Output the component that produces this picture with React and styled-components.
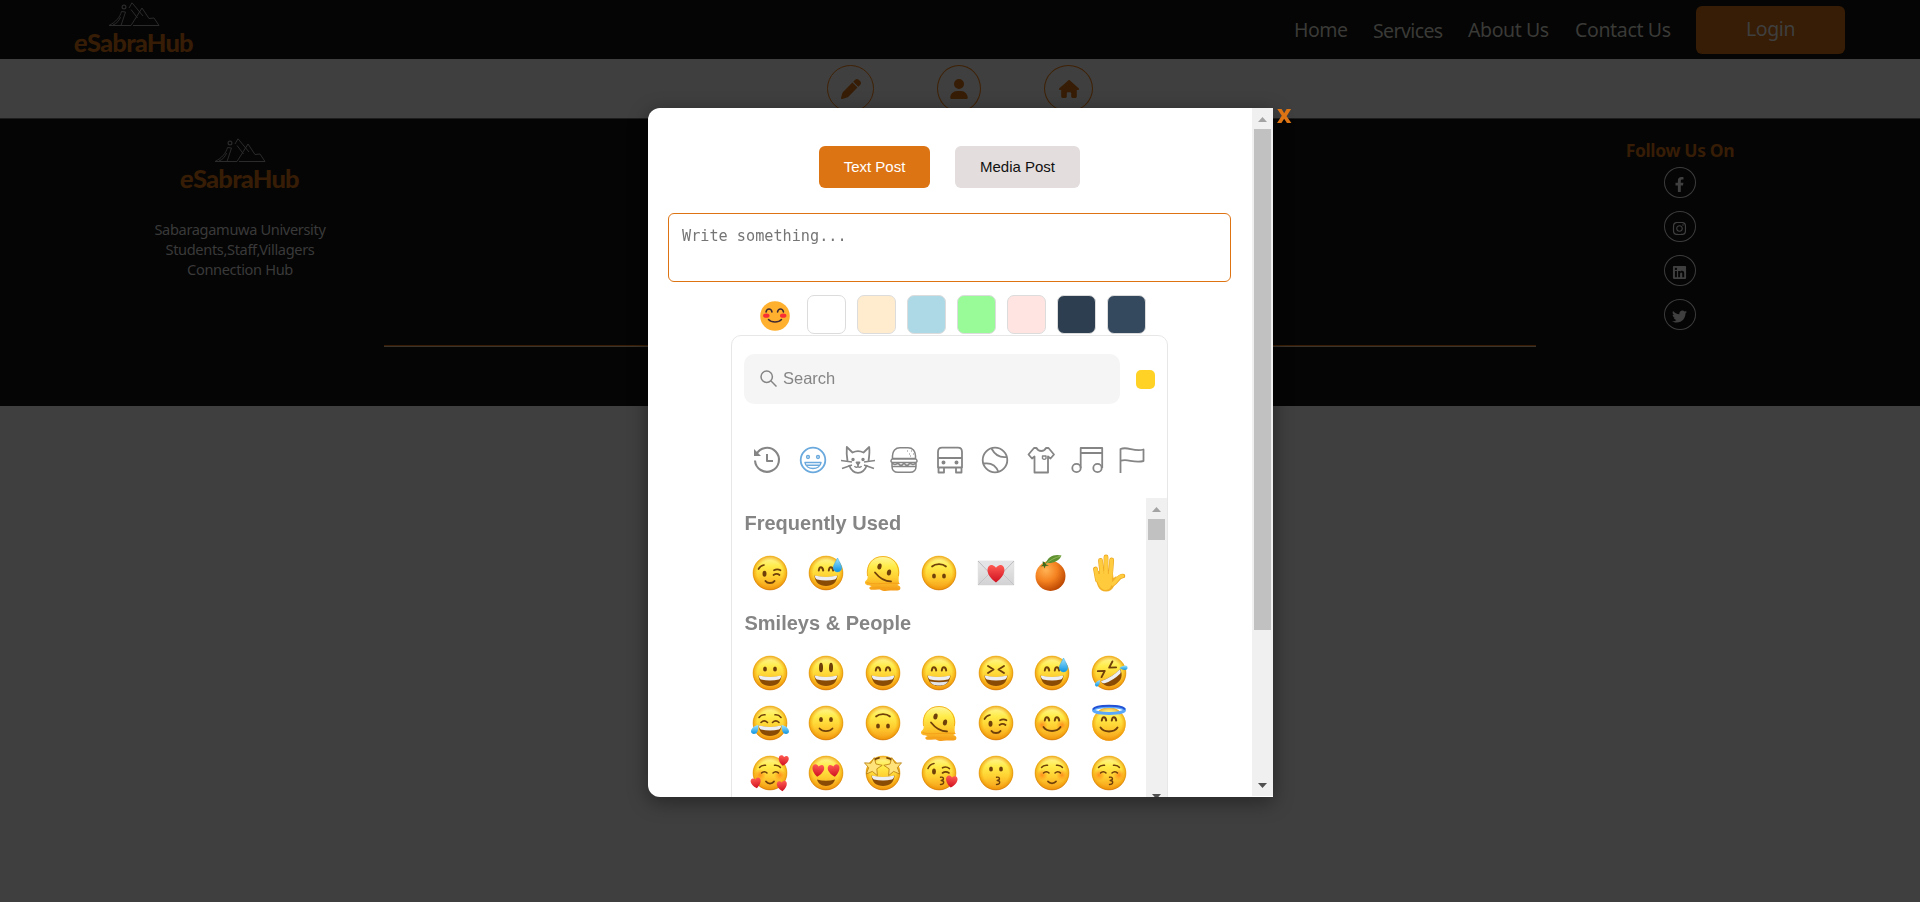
import React from 'react';
import styled, { createGlobalStyle } from 'styled-components';
import { FaPen, FaUser, FaHouse } from 'react-icons/fa6';
import { FaFacebookF, FaInstagram, FaLinkedin, FaTwitter } from 'react-icons/fa';

const GlobalStyle = createGlobalStyle`
  * { box-sizing: border-box; }
  body {
    margin: 0;
    background: #3f3f3f;
    font-family: "Noto Sans", "Open Sans", sans-serif;
    overflow: hidden;
  }
`;

/* ---------- page behind the dialog ---------- */

const Page = styled.div`
  min-height: 902px;
  background: #3f3f3f;
`;

const Header = styled.header`
  display: flex;
  justify-content: space-between;
  align-items: flex-start;
  height: 59px;
  padding: 0 75px;
  background: #050505;
`;

const Nav = styled.nav`
  display: flex;
  align-items: center;
  height: 60px;
`;

const NavLink = styled.a`
  width: ${(p) => p.$w}px;
  margin-right: ${(p) => p.$gap}px;
  margin-bottom: 2px;
  padding-top: ${(p) => p.$drop || 0}px;
  color: #3a3a37;
  font-size: 19.5px;
  line-height: 27px;
  letter-spacing: ${(p) => p.$track}px;
  white-space: nowrap;
`;

const LoginButton = styled.button`
  width: 149px;
  height: 48px;
  padding: 0 0 4px;
  border: 0;
  border-radius: 6px;
  background: #371d05;
  color: #3f3f3f;
  font: 19.5px "Noto Sans", sans-serif;
  letter-spacing: -0.4px;
`;

const IconBar = styled.div`
  display: flex;
  justify-content: center;
  gap: 63px;
  height: 59px;
  padding-top: 6px;
`;

const RoundIcon = styled.div`
  display: flex;
  align-items: center;
  justify-content: center;
  width: ${(p) => p.$w}px;
  height: 47px;
  border: 1px solid #3f2105;
  border-radius: 50%;
  color: #371d05;
  font-size: 20px;
`;

const Footer = styled.footer`
  height: 288px;
  border-top: 1px solid #1d1d1d;
  background: #050505;
`;

const FooterColumns = styled.div`
  display: flex;
  justify-content: space-between;
  height: 226px;
`;

const FooterColumn = styled.div`
  display: flex;
  flex-direction: column;
  align-items: center;
  width: 480px;
  padding-top: ${(p) => p.$top}px;
`;

const About = styled.p`
  margin: 27px 0 0;
  color: #3a3a3a;
  font-size: 14.6px;
  line-height: 20px;
  letter-spacing: -0.35px;
  text-align: center;
`;

const FollowTitle = styled.h3`
  margin: 0 0 5px;
  color: #371d05;
  font-size: 17.5px;
  font-weight: 700;
  line-height: 24px;
  letter-spacing: -0.35px;
  white-space: nowrap;
`;

const SocialLink = styled.a`
  display: flex;
  align-items: center;
  justify-content: center;
  width: 32px;
  height: 31px;
  margin-bottom: 13px;
  padding: 3px 1px 0 0;
  border: 1px solid #3c3c3c;
  border-radius: 50%;
  color: #3f3f3f;
  font-size: 15px;
`;

const Divider = styled.hr`
  width: 60%;
  height: 2px;
  margin: 0 auto;
  border: 0;
  border-top: 1px solid #371d05;
  border-bottom: 1px solid #3a332c;
`;

/* ---------- dialog ---------- */

const Dialog = styled.div`
  position: fixed;
  top: 108px;
  left: 648px;
  display: flex;
  width: 625px;
  height: 689px;
  border-radius: 12px 0 0 12px;
  background: #fff;
  box-shadow: 0 5px 20px rgba(0, 0, 0, 0.4);
`;

const DialogBody = styled.div`
  display: flex;
  flex-direction: column;
  align-items: center;
  width: 604px;
  padding: 38px 21px 0 20px;
  overflow: hidden;
  border-radius: 12px 0 0 12px;
`;

const CloseButton = styled.button`
  position: absolute;
  top: -4px;
  left: 629px;
  padding: 0;
  border: 0;
  background: none;
  color: #dd7414;
  font: 900 20px/24px "Noto Sans", sans-serif;
`;

const Tabs = styled.div`
  display: flex;
  flex: none;
  gap: 25px;
`;

const Tab = styled.button`
  width: ${(p) => p.$w}px;
  height: 42px;
  padding: 0 0 2px;
  border: 0;
  border-radius: 6px;
  background: ${(p) => (p.$active ? '#dd7414' : '#e3dddd')};
  color: ${(p) => (p.$active ? '#fff' : '#111')};
  font: 15px "Liberation Sans", Arial, sans-serif;
`;

const PostInput = styled.textarea`
  flex: none;
  width: 563px;
  height: 69px;
  margin-top: 25px;
  padding: 12px 13px;
  border: 1px solid #dd7414;
  border-radius: 6px;
  outline: 0;
  resize: none;
  overflow: hidden;
  font: 15.2px/20px "DejaVu Sans Mono", monospace;
  &::placeholder { color: #757575; }
`;

const SwatchRow = styled.div`
  display: flex;
  flex: none;
  align-items: center;
  gap: 11px;
  margin-top: 12px;
  height: 41px;
`;

const EmojiToggle = styled.span`
  display: flex;
  justify-content: flex-end;
  width: 42px;
  padding: 3px 6px 0 0;
`;

const Swatch = styled.span`
  width: 39px;
  height: 39px;
  border: 1px solid #dcdcdc;
  border-radius: 7px;
  background: ${(p) => p.$color};
`;

const Picker = styled.section`
  flex: none;
  width: 437px;
  height: 480px;
  border: 1px solid #e7e7e7;
  border-radius: 10px;
  background: #fff;
  font-family: "Liberation Sans", Arial, sans-serif;
  color: #858585;
`;

const SearchRow = styled.div`
  display: flex;
  align-items: center;
  gap: 16px;
  padding: 18px 12px 0;
`;

const SearchBox = styled.div`
  display: flex;
  align-items: center;
  gap: 6px;
  width: 376px;
  height: 50px;
  padding: 0 16px 1px;
  border-radius: 10px;
  background: #f5f5f5;
  font-size: 16.5px;
`;

const SkinTone = styled.span`
  width: 19px;
  height: 19px;
  border-radius: 5px;
  background: #ffd225;
`;

const Categories = styled.div`
  display: flex;
  height: 94px;
  padding: 42px 0 0 12px;
`;

const Category = styled.span`
  display: flex;
  justify-content: center;
  width: 45.7px;
  color: ${(p) => (p.$active ? '#6aa9dd' : '#858585')};
`;

const Results = styled.div`
  display: flex;
  height: 309px;
`;

const EmojiList = styled.div`
  width: 414px;
  padding-left: 9.5px;
`;

const GroupTitle = styled.h2`
  margin: 0;
  padding-left: 3px;
  font-size: 20px;
  line-height: 50px;
  letter-spacing: 0;
`;

const EmojiGrid = styled.div`
  display: grid;
  grid-template-columns: repeat(7, 56.5px);
  grid-auto-rows: 50px;
  place-items: center;
`;

/* ---------- scroll bars ---------- */

const Track = styled.div`
  display: flex;
  flex-direction: column;
  align-items: center;
  width: 21px;
  height: ${(p) => p.$h}px;
  background: #f0f0f0;
`;

const Arrow = styled.span`
  display: flex;
  align-items: center;
  justify-content: center;
  height: 21px;
  padding-top: ${(p) => (p.$last ? 0 : 2)}px;
  margin-top: ${(p) => (p.$last ? 'auto' : 0)};
`;

const Thumb = styled.span`
  width: 17px;
  height: ${(p) => p.$h}px;
  background: #c1c1c1;
`;

function ScrollBar({ height, thumb }) {
  return (
    <Track $h={height}>
      <Arrow>
        <svg width="9" height="5" viewBox="0 0 9 5"><path d="M0 5 4.500 0 9 5Z" fill="#a3a3a3" /></svg>
      </Arrow>
      <Thumb $h={thumb} />
      <Arrow $last>
        <svg width="9" height="5" viewBox="0 0 9 5"><path d="M0 0h9L4.500 5Z" fill="#505050" /></svg>
      </Arrow>
    </Track>
  );
}

/* ---------- logo ---------- */

const LogoBox = styled.div`
  display: flex;
  flex-direction: column;
  align-items: center;
  width: 118px;
  height: 56px;
`;

const LogoDrawing = styled.svg`
  flex: none;
`;

const LogoName = styled.span`
  margin-top: -1px;
  margin-left: -1px;
  color: #371d05;
  font: 900 25.5px/32px Lato, sans-serif;
  letter-spacing: -0.8px;
  white-space: nowrap;
`;

const LogoInitial = styled.span`
  display: inline-block;
  transform: skewX(-5deg);
`;

function Logo() {
  return (
    <LogoBox>
      <LogoDrawing width="118" height="27" viewBox="0 0 118 27">
        <g fill="none" stroke="#2b2b2b" strokeWidth="1">
          <circle cx="49" cy="7" r="1.900" strokeWidth="1.200" />
          <path d="M34 25.500C41 22 45 17 46.500 11.500L50.500 12 46 25.500H34M38 25C42 23.500 44.500 20 45.500 17" />
          <path d="M54 8 57 2.800 68 16M56 9.500 62.500 18" />
          <path d="M46 25.500H56L67 8 74 18.500 79 18 84 25.500H58" />
        </g>
      </LogoDrawing>
      <LogoName><LogoInitial>e</LogoInitial>SabraHub</LogoName>
    </LogoBox>
  );
}

/* ---------- category icons ---------- */

const categoryArt = {
  recent: (
    <>
      <path d="M3.200 8.500A12 12 0 1 1 2 14.500" strokeWidth="2.100" />
      <path d="M1 3v7h7Z" fill="currentColor" stroke="none" />
      <path d="M14 8v7h6" strokeWidth="2" />
    </>
  ),
  people: (
    <>
      <circle cx="14" cy="14" r="12.300" />
      <circle cx="9" cy="11" r="1.400" strokeWidth="1.500" />
      <circle cx="19" cy="11" r="1.400" strokeWidth="1.500" />
      <path d="M6 16.500h16c-1 8-15 8-16 0ZM7.500 19.300h13" strokeWidth="1.500" />
    </>
  ),
  nature: (
    <>
      <path d="M3.500 15C2.500 9 2.500 5 2.800 1L8.500 6.500c3.500-1.800 7.500-1.800 11 0L25.200 1c.5 4 .3 8-.7 14M5 19c4 10.500 14 10.500 18 0" />
      <path d="M-3 14.500 8 16M-2 22.500 8 19M31 14.500 20 16M30 22.500 20 19M14 18v2.500M10.500 20c1 1.800 2.700 1.500 3.500.5.800 1 2.500 1.300 3.500-.5" strokeWidth="1.500" />
      <path d="M12.500 16.500h3L14 18.500Z" fill="currentColor" />
      <circle cx="9" cy="13.500" r=".8" fill="currentColor" />
      <circle cx="19" cy="13.500" r=".8" fill="currentColor" />
    </>
  ),
  food: (
    <>
      <path d="M2.500 12.500C2 4 6 1.700 10 1.700h8c4 0 8 2.300 7.500 10.800ZM2 13h24c1.500 1.500 1.500 3-.5 3.500h-23C.5 16 .5 14.500 2 13ZM2 17c2 2 4 2 6 0 2 3 4 3 6 0 2 3 4 3 6 0 2 2 4 2 6 0M2 20.500h24M2 20.500c0 4 2 5.800 6 5.800h12c4 0 6-1.800 6-5.800M2 16.500v4M26 16.500v4" strokeWidth="1.500" />
      <path d="M17 5h1M21 5h1M19 8h1M23 8h1M20 10h1" strokeWidth="1.200" />
    </>
  ),
  travel: (
    <>
      <path d="M2 21.500V6C2 3 3.500 1.700 6 1.700h16c2.500 0 4 1.300 4 4.300v15.500ZM2 12h24M2.500 21.500v5H8v-5M20 21.500v5h5.500v-5" />
      <circle cx="7.500" cy="16.500" r="1.100" fill="currentColor" />
      <circle cx="20.500" cy="16.500" r="1.100" fill="currentColor" />
    </>
  ),
  activity: (
    <>
      <circle cx="14" cy="14" r="12.300" />
      <path d="M10.500 2.500c4 7.500 9 9.500 15.500 8.500M3 17.500c7-1 12 2 14.500 8.500" />
    </>
  ),
  objects: (
    <>
      <path d="M9.500 2H7L1.500 8.500 5 12.500 7.500 10.500v16h13.500v-16l2.500 2 3.500-4L21.500 2H19c-2 4-7.500 4-9.500 0Z" />
      <path d="M15.500 10h3.500v2.500c-1 1-2.500 1-3.500 0Z" strokeWidth="1.400" />
    </>
  ),
  symbols: (
    <>
      <path d="M7.700 22V2h21.500v20M7.700 7h21.500" />
      <circle cx="3.500" cy="22" r="4.200" />
      <circle cx="24.500" cy="22" r="4.200" />
    </>
  ),
  flags: <path d="M2.500 27V3c7-3 13 3 23 .5V15C15 17.500 9 12 2.500 15" />,
};

function CategoryIcon({ name }) {
  return (
    <svg width="28" height="28" viewBox="0 0 28 28" overflow="visible" fill="none" stroke="currentColor" strokeWidth="1.800" strokeLinejoin="round">
      {categoryArt[name]}
    </svg>
  );
}

/* ---------- emoji ---------- */

const HEART = 'M0 5.500C-8-.5-5-6 -2-5-.7-4.600 0-3.500 0-3.500S.7-4.600 2-5C5-6 8-.5 0 5.500Z';

const DefsHolder = styled.svg`
  position: absolute;
`;

function EmojiDefs() {
  return (
    <DefsHolder width="0" height="0">
      <defs>
        <linearGradient id="skin" x1="0" y1="0" x2="0" y2="1">
          <stop offset="0" stopColor="#fff6a0" />
          <stop offset=".3" stopColor="#ffec4a" />
          <stop offset=".62" stopColor="#ffce30" />
          <stop offset="1" stopColor="#f49a18" />
        </linearGradient>
        <linearGradient id="edge" x1="0" y1="0" x2="0" y2="1">
          <stop offset="0" stopColor="#f0ac00" />
          <stop offset="1" stopColor="#c96d05" />
        </linearGradient>
        <radialGradient id="rim">
          <stop offset=".74" stopColor="#f5a300" stopOpacity="0" />
          <stop offset="1" stopColor="#e88c00" stopOpacity=".7" />
        </radialGradient>
        <radialGradient id="blush">
          <stop offset="0" stopColor="#ff6a10" stopOpacity=".65" />
          <stop offset="1" stopColor="#ff7a10" stopOpacity="0" />
        </radialGradient>
        <radialGradient id="fruit" cx=".35" cy=".3" r=".75">
          <stop offset="0" stopColor="#ffb355" />
          <stop offset=".5" stopColor="#f58220" />
          <stop offset="1" stopColor="#b84300" />
        </radialGradient>
        <linearGradient id="paper" x1="0" y1="0" x2="0" y2="1">
          <stop offset="0" stopColor="#e9e9e9" />
          <stop offset="1" stopColor="#d2d2d4" />
        </linearGradient>
        <linearGradient id="tear" x1="0" y1="0" x2="0" y2="1">
          <stop offset="0" stopColor="#9fe4ff" />
          <stop offset="1" stopColor="#0f94e0" />
        </linearGradient>
        <linearGradient id="love" x1="0" y1="0" x2="0" y2="1">
          <stop offset="0" stopColor="#ff5a52" />
          <stop offset="1" stopColor="#cf1020" />
        </linearGradient>
      </defs>
    </DefsHolder>
  );
}

const Head = () => (
  <>
    <circle cx="18" cy="18" r="17" fill="url(#skin)" />
    <circle cx="18" cy="18" r="16.900" fill="url(#rim)" stroke="url(#edge)" strokeWidth=".6" />
  </>
);
const Eyes = ({ y = 14, ry = 2.6, rx = 1.9 }) => (
  <g fill="#70400a">
    <ellipse cx="13" cy={y} rx={rx} ry={ry} />
    <ellipse cx="23" cy={y} rx={rx} ry={ry} />
  </g>
);
const Line = ({ d, w = 1.7 }) => (
  <path d={d} fill="none" stroke="#70400a" strokeWidth={w} strokeLinecap="round" strokeLinejoin="round" />
);
const Grin = ({ teeth }) => (
  <>
    <path d="M6.500 20.500Q18 23.500 29.500 20.500C29 27.500 24.500 31 18 31S7 27.500 6.500 20.500Z" fill="#8a4c05" />
    <path d="M6.800 20.600Q18 23.500 29.200 20.600C29 23.500 28 24 27 24.500Q18 26.500 9 24.500C8 24 7 23.500 6.800 20.600Z" fill="#eceef1" />
    {teeth && <path d="M9 26.500Q18 28 27 26.500C25 30 22 30.500 18 30.500S11 30 9 26.500Z" fill="#dfe3e8" />}
  </>
);
const ArchEyes = () => <Line d="M10.800 15.500c.5-4.500 3.700-4.500 4.400 0M20.800 15.500c.5-4.500 3.700-4.500 4.400 0" w={2} />;
const CalmEyes = () => <Line d="M9.500 18c1.700-1.800 4-1.800 5.500 0M21 18c1.700-1.800 4-1.800 5.500 0M7.500 12.500c1.300-1.800 3.500-2.500 6-2.200M28.500 12.500c-1.300-1.800-3.500-2.500-6-2.200" w={1.5} />;
const Blush = () => (
  <>
    <circle cx="8" cy="20" r="6" fill="url(#blush)" />
    <circle cx="28" cy="20" r="6" fill="url(#blush)" />
  </>
);
const Heart = ({ x, y, s = 1, r = 0 }) => (
  <path d={HEART} fill="url(#love)" transform={`translate(${x} ${y}) rotate(${r}) scale(${s})`} />
);
const Wink = () => (
  <>
    <ellipse cx="12.500" cy="18.700" rx="2" ry="3" fill="#70400a" />
    <Line d="M6.500 14c1.200-2.400 3-3.600 5.500-4M22 15.300c2-1.200 4.600-1.200 6.500 0M21.500 20c2-1.500 4.200-1.600 6 0" w={1.7} />
  </>
);
const Sweat = () => <path d="M29.500 3c-2.500 5-4.200 7.500-4.200 9.700a4.200 4.200 0 0 0 8.400 0C33.700 10.500 31.500 7 29.500 3Z" fill="url(#tear)" stroke="#2aa4e8" strokeWidth=".5" />;
const KissMouth = () => <Line d="M17.500 22.200c3.800-.5 3.800 2.800.7 3.300 3.600 0 3.200 4-.7 4" w={1.400} />;
const STAR = 'M0-8 2.300-2.600 8-2.200 3.700 1.600 5 7.500 0 4.400-5 7.500-3.700 1.600-8-2.200-2.300-2.600Z';

const emojiArt = {
  wink: <><Head /><Wink /><Line d="M13.500 26c2 2.800 7 2.800 9 0" w={2} /></>,
  sweat: <><Head /><ArchEyes /><Grin /><Sweat /></>,
  melt: (
    <>
      <path d="M2.500 20C1 10 7 1 18 1s18 9 16 19c-.5 4-.5 6 0 7.500.5 2-1.500 2.500-3 2.500 3 0 5.500 2 4 4.500-1.500 2-7 .5-10 1-4 .5-7 .8-9-.6-3-1.200-9 .8-11-.6-1.500-1.500 0-3.300 3-3.300-3.500 0-8-.7-8-3.500 0-2.500 3.500-1.800 2.500-7.500Z" fill="url(#skin)" />
      <path d="M2.500 21C1 10 7 1.500 18 1.500S35 11 33.500 21" fill="none" stroke="#f0a40a" strokeWidth="1" opacity=".8" />
      <ellipse cx="14.500" cy="11.500" rx="2.100" ry="3" fill="#70400a" transform="rotate(12 14.500 11.500)" />
      <ellipse cx="24" cy="17.500" rx="2.100" ry="3" fill="#70400a" transform="rotate(12 24 17.500)" />
      <Line d="M10 17.500c4 5 10 9 16 9" w={1.8} />
      <path d="M1.500 27.500c8 3.500 18-1 33 1M7 33c8-2 17 1 25 0" fill="none" stroke="#f5a21a" strokeWidth="1.200" />
    </>
  ),
  upside: <><Head /><Line d="M11 11.500c3.500-3.200 10.500-3.200 14 0" w={1.7} /><Eyes y={21} /></>,
  letter: (
    <>
      <path d="M.2 6h35.600v24H.2Z" fill="url(#paper)" stroke="#d3d3d3" strokeWidth=".5" />
      <path d="M0 30 13 17M36 30 23 17" stroke="#bcbcbf" strokeWidth=".7" />
      <path d="M0 6 15 21.500q3 2.500 6 0L36 6" fill="#e4e4e6" stroke="#aaaaae" strokeWidth=".7" />
      <Heart x={18} y={18.500} s={1.650} />
    </>
  ),
  orange: (
    <>
      <circle cx="16.500" cy="21" r="15" fill="url(#fruit)" />
      <path d="M11.500 9c2-7.500 9-10.500 16-8.500-2 5-8 8-14 7.500Z" fill="#5f9130" />
      <path d="M12 9c4-4 9-6.500 15-8" fill="none" stroke="#9cc262" strokeWidth=".8" />
      <path d="M8.500 6.500c2 0 3 1.500 3.500 3l3 1-3.500.6-1 2.400-1-2.500-3 .5 2.500-2Z" fill="#3c6b1e" />
    </>
  ),
  hand: (
    <g transform="translate(-2.500 0)">
      <g fill="none" stroke="#eba51f" strokeLinecap="round">
        <path d="M7 14 9 25M12 5.500 13.500 20M17.500 2V20M23.200 5 22 20" strokeWidth="4.800" />
        <path d="M34.500 21c-5 0-6 6-10 8" strokeWidth="4.600" />
      </g>
      <path d="M6.700 16h17.500l.8 7 3-2C27 29 25 36.500 17.500 36.500S7.500 30 6.700 16Z" fill="#f2b027" />
      <g fill="none" stroke="#ffcc40" strokeLinecap="round">
        <path d="M7.200 14.200 9 25M12.100 5.700 13.500 20M17.500 2.200V22M23.100 5.200 22 22" strokeWidth="3.700" />
        <path d="M34 21c-5 0-6 6-10 8" strokeWidth="3.600" />
      </g>
      <path d="M8 19h14.500l1 6c0 6-2 10-6.500 10S8.500 30 8 19Z" fill="#ffca3c" />
    </g>
  ),
  grin: <><Head /><Eyes y={14} /><Grin /></>,
  bigGrin: <><Head /><Eyes y={12.500} ry={4.700} rx={2} /><Grin /></>,
  happy: <><Head /><ArchEyes /><Grin /></>,
  beam: <><Head /><ArchEyes /><Grin teeth /></>,
  squint: <><Head /><Line d="M10 11l5.500 3.500-5.500 3.500M26 11l-5.500 3.500L26 18" w={1.9} /><Grin /></>,
  rofl: (
    <>
      <Head />
      <g transform="rotate(-32 18 18)">
        <Line d="M9.500 10.500l6 3.500-6 3.500M27 10l-6 3.500 6 3.500" w={1.9} />
        <Grin />
      </g>
      <path d="M28.500 13c3-3 8-3.500 8-.5 0 3.500-4.500 3-8 .5Z" fill="url(#tear)" />
      <path d="M9 25c-3 1-6.500 3.500-4.500 6 2.500 2 4.500-2 4.500-6Z" fill="url(#tear)" />
    </>
  ),
  joy: (
    <>
      <Head />
      <Line d="M9 17.500c2-2 4.500-2 6.500 0M20.500 17.500c2-2 4.500-2 6.500 0M7 12.500c1.500-2 3.500-3 6-2.700M29 12.500c-1.500-2-3.500-3-6-2.700" w={1.6} />
      <Grin />
      <path d="M6.500 20C2 20.500-1 24-1 26.500s4.500 4 6.500 0c.8-2 .8-4 1-6.500ZM29.500 20c4.500.5 7.500 4 7.500 6.500s-4.500 4-6.500 0c-.8-2-.8-4-1-6.500Z" fill="url(#tear)" />
    </>
  ),
  smile: <><Head /><Eyes y={14.500} /><Line d="M11.500 23.500c3 3.500 10 3.500 13 0" /></>,
  blush: <><Head /><Blush /><ArchEyes /><Line d="M9.500 22c3.500 5.300 13.500 5.300 17 0" w={1.900} /></>,
  halo: (
    <>
      <circle cx="18" cy="19" r="16.700" fill="url(#skin)" />
      <circle cx="18" cy="19" r="16.700" fill="url(#rim)" />
      <ArchEyes />
      <Line d="M9.500 22.500c3.500 5.300 13.500 5.300 17 0" w={1.900} />
      <ellipse cx="18" cy="5" rx="15.500" ry="3.400" fill="none" stroke="#5aa8fa" strokeWidth="3" />
      <path d="M2 4.500C5-.5 31-.5 34 4.500" fill="none" stroke="#2450d4" strokeWidth="1.800" />
    </>
  ),
  hearts: (
    <>
      <Head /><Blush /><CalmEyes /><Line d="M14 26.500c2 2.700 6 2.700 8 0" w={1.8} />
      <Heart x={31.500} y={5.500} s={0.980} r={8} />
      <Heart x={4} y={28} s={0.980} r={-10} />
      <Heart x={30} y={31} s={0.980} r={-5} />
    </>
  ),
  heartEyes: <><Head /><path d="M9 24.500Q18 27 27 24.500C25 33 11 33 9 24.500Z" fill="#8a4c05" /><Heart x={10} y={15.500} s={1.150} r={8} /><Heart x={26} y={15.500} s={1.150} r={-8} /></>,
  starEyes: (
    <>
      <Head /><Grin />
      <Line d="M9 5.500c1-1.500 3-2.500 5-2.700M27 5.500c-1-1.500-3-2.500-5-2.700" />
      <g fill="#ffe27a" stroke="#b97f10" strokeWidth=".7">
        <path d={STAR} transform="translate(8 11.500) rotate(8) scale(1.120)" />
        <path d={STAR} transform="translate(28 11.500) rotate(-8) scale(1.120)" />
      </g>
    </>
  ),
  kissHeart: <><Head /><ellipse cx="13" cy="16.500" rx="1.900" ry="2.900" fill="#70400a" /><Line d="M7 13.500c1.200-3 3.200-4.500 6-5M21.500 12.800c2.500-1.300 5-.8 7 .8M21.500 18c2-1.400 4.500-1.300 6.500 0" w={1.6} /><g transform="translate(2 0)"><KissMouth /></g><Heart x={30.500} y={26.500} s={1.120} r={8} /></>,
  kiss: <><Head /><Eyes y={14} /><g transform="translate(1 0)"><KissMouth /></g></>,
  relaxed: <><Head /><Blush /><CalmEyes /><Line d="M14 26.500c2 2.400 6 2.400 8 0" w={1.8} /></>,
  kissCalm: <><Head /><Blush /><CalmEyes /><g transform="translate(1 0)"><KissMouth /></g></>,
};

function Emoji({ name }) {
  return (
    <svg width="36" height="36" viewBox="0 0 36 36" overflow="visible">
      {emojiArt[name]}
    </svg>
  );
}

function FlatSmile() {
  return (
    <svg width="30" height="30" viewBox="0 0 30 30">
      <circle cx="15" cy="15" r="14.800" fill="#ffb02e" />
      <ellipse cx="6.300" cy="14.700" rx="3.200" ry="2.100" fill="#f92f33" />
      <ellipse cx="23.200" cy="14.700" rx="3.200" ry="2.100" fill="#f92f33" />
      <path d="M6 11c.8-4 5.200-4 6 0M17.500 11c.8-4 5.200-4 6 0M8.500 18.500c3 3.300 10 3.300 13 0" fill="none" stroke="#402a32" strokeWidth="1.500" strokeLinecap="round" />
    </svg>
  );
}

const swatches = ['#ffffff', '#ffebcd', '#add8e6', '#98fb98', '#ffe4e1', '#2c3e50', '#34495e'];
const categories = ['recent', 'people', 'nature', 'food', 'travel', 'activity', 'objects', 'symbols', 'flags'];
const frequent = ['wink', 'sweat', 'melt', 'upside', 'letter', 'orange', 'hand'];
const smileys = [
  'grin', 'bigGrin', 'happy', 'beam', 'squint', 'sweat', 'rofl',
  'joy', 'smile', 'upside', 'melt', 'wink', 'blush', 'halo',
  'hearts', 'heartEyes', 'starEyes', 'kissHeart', 'kiss', 'relaxed', 'kissCalm',
];

export default function App() {
  return (
    <Page>
      <GlobalStyle />
      <EmojiDefs />
      <Header>
        <Logo />
        <Nav>
          <NavLink $w={54} $gap={25} $track={-0.5}>Home</NavLink>
          <NavLink $w={70} $gap={25} $drop={2} $track={-0.6}>Services</NavLink>
          <NavLink $w={82} $gap={25} $track={-0.4}>About Us</NavLink>
          <NavLink $w={96} $gap={25} $track={-0.35}>Contact Us</NavLink>
          <LoginButton>Login</LoginButton>
        </Nav>
      </Header>
      <IconBar>
        <RoundIcon $w={47}><FaPen /></RoundIcon>
        <RoundIcon $w={44}><FaUser /></RoundIcon>
        <RoundIcon $w={49}><FaHouse /></RoundIcon>
      </IconBar>
      <Footer>
        <FooterColumns>
          <FooterColumn $top={17}>
            <Logo />
            <About>
              Sabaragamuwa University<br />Students,Staff,Villagers<br />Connection Hub
            </About>
          </FooterColumn>
          <FooterColumn $top={19}>
            <FollowTitle>Follow Us On</FollowTitle>
            <SocialLink><FaFacebookF /></SocialLink>
            <SocialLink><FaInstagram /></SocialLink>
            <SocialLink><FaLinkedin /></SocialLink>
            <SocialLink><FaTwitter /></SocialLink>
          </FooterColumn>
        </FooterColumns>
        <Divider />
      </Footer>

      <Dialog>
        <DialogBody>
          <Tabs>
            <Tab $w={111} $active>Text Post</Tab>
            <Tab $w={125}>Media Post</Tab>
          </Tabs>
          <PostInput placeholder="Write something..." />
          <SwatchRow>
            <EmojiToggle><FlatSmile /></EmojiToggle>
            {swatches.map((c) => <Swatch key={c} $color={c} />)}
          </SwatchRow>
          <Picker>
            <SearchRow>
              <SearchBox>
                <svg width="17" height="17" viewBox="0 0 17 17" fill="none" stroke="currentColor" strokeWidth="1.500">
                  <circle cx="6.700" cy="6.700" r="5.700" />
                  <path d="m10.800 10.800 5.700 5.700" />
                </svg>
                Search
              </SearchBox>
              <SkinTone />
            </SearchRow>
            <Categories>
              {categories.map((c) => (
                <Category key={c} $active={c === 'people'}><CategoryIcon name={c} /></Category>
              ))}
            </Categories>
            <Results>
              <EmojiList>
                <GroupTitle>Frequently Used</GroupTitle>
                <EmojiGrid>{frequent.map((e) => <Emoji key={e} name={e} />)}</EmojiGrid>
                <GroupTitle>Smileys &amp; People</GroupTitle>
                <EmojiGrid>{smileys.map((e) => <Emoji key={e} name={e} />)}</EmojiGrid>
              </EmojiList>
              <ScrollBar height={309} thumb={21} />
            </Results>
          </Picker>
        </DialogBody>
        <ScrollBar height={688} thumb={501} />
        <CloseButton>X</CloseButton>
      </Dialog>
    </Page>
  );
}
